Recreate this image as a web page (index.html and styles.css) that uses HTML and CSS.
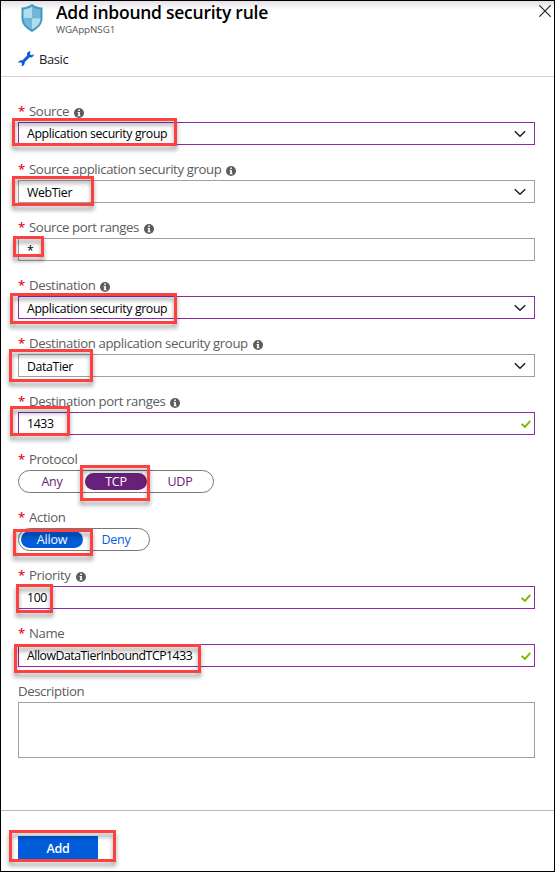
FILE: index.html
```html
<!DOCTYPE html>
<html lang="en">
<head>
<meta charset="utf-8">
<title>Add inbound security rule</title>
<link rel="stylesheet" href="styles.css">
</head>
<body>
<svg class="defs" width="0" height="0" aria-hidden="true">
  <symbol id="info" viewBox="0 0 10 10"><circle cx="5" cy="5" r="5" fill="#5c5c5c"/><path d="M4.200 1.500h1.700v1.400H4.200zM3.600 4h2.300v3.400h.7v.9H3.500v-.9h.7V4.900h-.6z" fill="#fff"/></symbol>
  <symbol id="chevron" viewBox="0 0 12 8"><path d="M.8 1.200 6 6.200l5.200-5" fill="none" stroke="#1a1a1a" stroke-width="1.400"/></symbol>
  <symbol id="check" viewBox="0 0 10 8"><path d="M.6 3.900 4 6.900 9.300.8" fill="none" stroke="#7fba00" stroke-width="2"/></symbol>
</svg>
<main class="blade">
  <header class="header">
    <svg class="shield" viewBox="0 0 22 28">
      <path d="M11 0c3 2.300 6.500 3.500 10.500 3.400V14c0 7-5 11-10.500 14C5.500 25 .5 21 .5 14V3.400C4.500 3.500 8 2.300 11 0z" fill="#3f9bc4"/>
      <path d="M11 2.500v11.700H2.500V5.400C5.800 5.200 8.600 4.200 11 2.500z" fill="#b0dcec"/>
      <path d="M11 2.500c2.400 1.700 5.200 2.700 8.500 2.900v8.800H11z" fill="#72b7d9"/>
      <path d="M2.500 14.200H11v11.400C6 22.700 2.600 19.700 2.500 14.200z" fill="#72b7d9"/>
      <path d="M11 14.200h8.500c-.1 5.500-3.500 8.500-8.500 11.400z" fill="#b0dcec"/>
    </svg>
    <div class="heading"><h1>Add inbound security rule</h1><p>WGAppNSG1</p></div>
    <svg class="close" viewBox="0 0 12 12"><path d="M.3.3l11.400 11.400M11.700.3.3 11.700" stroke="#222" stroke-width="1.200"/></svg>
  </header>
  <nav class="toolbar">
    <svg class="wrench" viewBox="0 0 16 16"><path d="M12.700.2C10.500-.2 8.700 1.500 9 3.700l.2.800-5 4.900c-2-.5-3.900.8-4.100 2.700l1.800-.9 1.700.5.500 1.700-1 1.900c2.400 0 4.100-1.800 3.500-4.100l5-4.900c2.300.7 4.400-1 4.300-3.400l-1.900 1.400-1.700-.6-.4-1.600z" fill="#0a5bdc"/></svg>
    <span>Basic</span>
  </nav>
  <form class="form">
    <div class="field"><div class="label"><b>*</b><span>Source</span><svg><use href="#info"/></svg></div>
      <div class="box edited"><span>Application security group</span><svg class="chev"><use href="#chevron"/></svg><i class="mark m1"></i></div></div>
    <div class="field"><div class="label"><b>*</b><span>Source application security group</span><svg><use href="#info"/></svg></div>
      <div class="box"><span class="low">WebTier</span><svg class="chev"><use href="#chevron"/></svg><i class="mark m2"></i></div></div>
    <div class="field"><div class="label"><b>*</b><span>Source port ranges</span><svg><use href="#info"/></svg></div>
      <div class="box"><span class="low">*</span><i class="mark m3"></i></div></div>
    <div class="field"><div class="label"><b>*</b><span>Destination</span><svg><use href="#info"/></svg></div>
      <div class="box edited"><span class="low">Application security group</span><svg class="chev"><use href="#chevron"/></svg><i class="mark m4"></i></div></div>
    <div class="field"><div class="label"><b>*</b><span>Destination application security group</span><svg><use href="#info"/></svg></div>
      <div class="box"><span class="low">DataTier</span><svg class="chev"><use href="#chevron"/></svg><i class="mark m5"></i></div></div>
    <div class="field"><div class="label"><b>*</b><span>Destination port ranges</span><svg><use href="#info"/></svg></div>
      <div class="box edited"><span>1433</span><svg class="tick"><use href="#check"/></svg><i class="mark m6"></i></div></div>
    <div class="field"><div class="label"><b>*</b><span>Protocol</span></div>
      <div class="pills purple"><span>Any</span><span class="on">TCP</span><span>UDP</span><i class="mark m7"></i></div></div>
    <div class="field"><div class="label"><b>*</b><span>Action</span></div>
      <div class="pills blue"><span class="on">Allow</span><span>Deny</span><i class="mark m8"></i></div></div>
    <div class="field"><div class="label"><b>*</b><span>Priority</span><svg><use href="#info"/></svg></div>
      <div class="box edited"><span>100</span><svg class="tick"><use href="#check"/></svg><i class="mark m9"></i></div></div>
    <div class="field"><div class="label"><b>*</b><span>Name</span></div>
      <div class="box edited"><span class="rule">AllowDataTierInboundTCP1433</span><svg class="tick"><use href="#check"/></svg><i class="mark m10"></i></div></div>
    <div class="field"><div class="label"><span>Description</span></div>
      <div class="box area"></div></div>
  </form>
  <footer class="footer"><div class="add"><span>Add</span><i class="mark m11"></i></div></footer>
</main>
</body>
</html>
```
FILE: styles.css
```css
* { box-sizing: border-box; }
body { margin: 0; font: 13px/18px "Open Sans", "Noto Sans", sans-serif; color: #111; background: #fff; }
.defs { display: block; height: 0; }
.blade {
  height: 872px; border: 1px solid #000; display: flex; flex-direction: column;
  background: linear-gradient(#e4dfe4, #fff 9px); overflow: hidden;
}
svg { flex: none; display: block; }
h1, p { margin: 0; white-space: nowrap; }

.header { display: flex; height: 43px; padding-left: 20px; }
.shield { width: 22px; height: 28px; margin-top: 3px; }
.heading { flex: 1; margin-left: 13px; }
h1 { font-size: 17.500px; font-weight: 600; line-height: 22px; letter-spacing: -.26px; color: #000; }
.heading p { font-size: 9.800px; line-height: 14px; color: #555; letter-spacing: -.06px; }
.close { width: 12px; height: 12px; margin: 4px 3px 0 0; }
.toolbar { display: flex; align-items: center; height: 33px; padding: 0 0 3px 17px; border-bottom: 1px solid #d2d2d2; color: #222; letter-spacing: -.4px; }
.wrench { width: 16px; height: 16px; margin-right: 5px; }

.form { padding: 26px 19px 0 17px; flex: none; }
.field { height: 58px; }
.label { display: flex; height: 19px; line-height: 16px; font-size: 13.200px; letter-spacing: -.39px; color: #5c5c5c; white-space: nowrap; }
.label b { width: 11px; font-weight: 600; color: #e81123; }
.label svg { width: 10px; height: 10px; margin: 5px 0 0 5px; }
.box { position: relative; display: flex; align-items: center; height: 23px; padding: 0 8px; border: 1px solid #a0a0a0; background: #fff; white-space: nowrap; color: #000; font-size: 12.300px; letter-spacing: -.36px; }
.box.edited { border-color: #8a2da5; }
.low { padding-top: 2px; }
.rule { letter-spacing: -.48px; }
.chev { width: 12px; height: 8px; margin-left: auto; }
.tick { width: 10px; height: 8px; margin: 1px -5px 0 auto; }
.area { height: 56px; }

.pills { position: relative; display: inline-flex; height: 23px; padding: 2px 1px; border: 1px solid #777; border-radius: 12px; font-size: 12.500px; letter-spacing: -.2px; }
.pills span { width: 62px; margin: 0 1px; border-radius: 9px; text-align: center; line-height: 17px; height: 17px; }
.purple { color: #68217a; }
.purple .on { background: #68217a; color: #fff; }
.blue { color: #015cda; }
.blue .on { background: #015cda; color: #fff; }

.footer { margin-top: auto; height: 61px; flex: none; padding: 25px 0 0 17px; border-top: 1px solid #b8b8b8; }
.add { position: relative; width: 80px; height: 24px; background: #015cda; color: #fff; font-size: 12.500px; font-weight: 600; text-align: center; line-height: 25px; letter-spacing: -.2px; }

/* red callout frames laid over the controls */
.mark { position: absolute; border: 3px solid #fd4141; filter: drop-shadow(0 4px 2px rgba(0, 0, 0, .38)); }
.m1 { left: -7px; top: -5px; width: 165px; height: 28px; }
.m2 { left: -7px; top: -5px; width: 82px; height: 30px; }
.m3 { left: -6px; top: -3px; width: 31px; height: 21px; }
.m4 { left: -9px; top: -4px; width: 167px; height: 31px; }
.m5 { left: -10px; top: -6px; width: 84px; height: 33px; }
.m6 { left: -9px; top: -7px; width: 60px; height: 30px; }
.m7 { left: 61px; top: -6px; width: 70px; height: 36px; }
.m8 { left: -6px; top: 0; width: 80px; height: 27px; }
.m9 { left: -3px; top: -3px; width: 37px; height: 29px; }
.m10 { left: -5px; top: -1px; width: 187px; height: 29px; }
.m11 { left: -9px; top: -6px; width: 107px; height: 32px; }
```
